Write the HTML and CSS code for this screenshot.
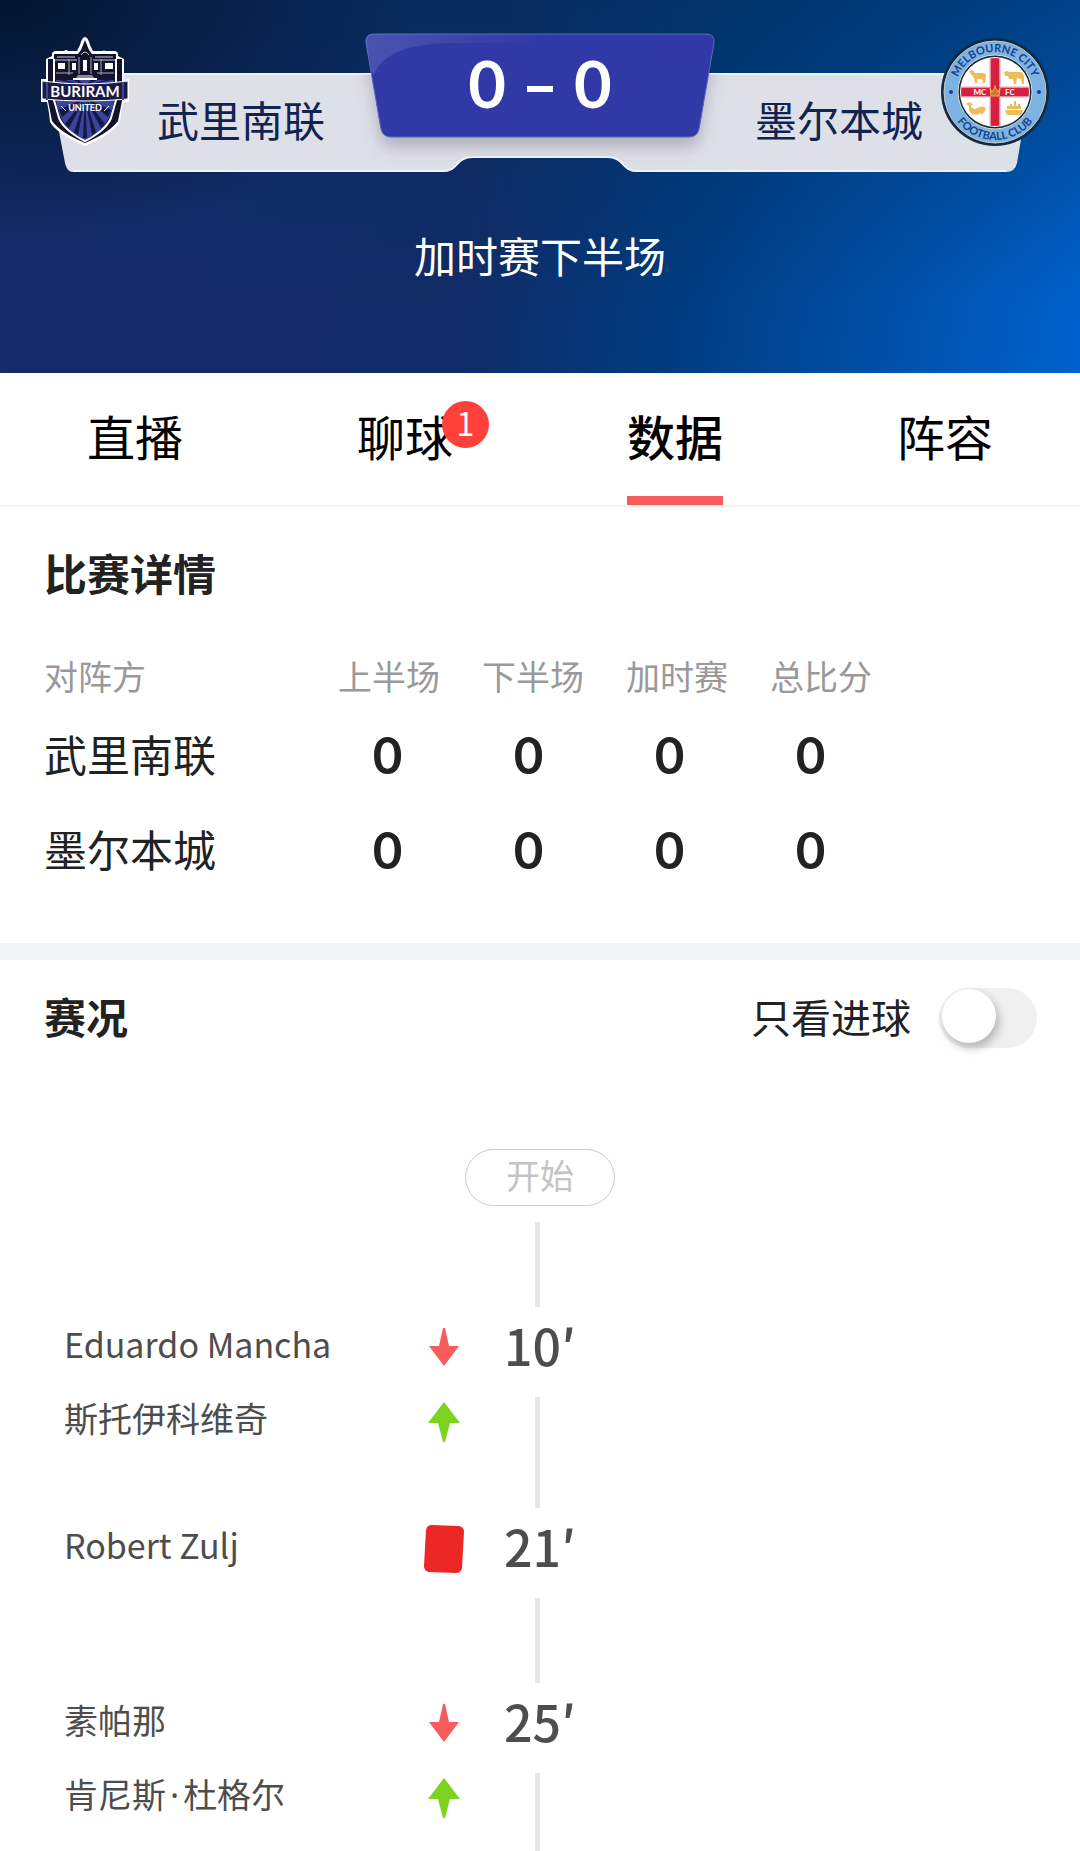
FILE: index.html
```html
<!DOCTYPE html>
<html lang="zh-CN">
<head>
    <meta charset="UTF-8">
    <meta name="viewport" content="width=device-width, initial-scale=1.0">
    <title>武里南联 - 墨尔本城</title>
    <link rel="stylesheet" href="styles.css">
</head>
<body>
    <header class="match-header">
        <div class="scoreboard">
            <svg class="board" viewBox="0 0 1080 180" aria-hidden="true">
                <defs>
                    <filter id="boardShadow" x="-10%" y="-10%" width="120%" height="150%">
                        <feDropShadow dx="0" dy="10" stdDeviation="8" flood-color="#5a5470" flood-opacity="0.35"/>
                    </filter>
                    <linearGradient id="shine" x1="0" y1="0" x2="1" y2="0">
                        <stop offset="0" stop-color="#fff" stop-opacity="0.13"/>
                        <stop offset="1" stop-color="#fff" stop-opacity="0"/>
                    </linearGradient>
                    <clipPath id="panelClip">
                        <path d="M48 74H1032L1017 163Q1015 172 1006 172H637C621 172 625 157 607 157H473C455 157 459 172 443 172H73Q67 172 65 163Z"/>
                    </clipPath>
                </defs>
                <path d="M48 74H1032L1017 163Q1015 172 1006 172H637C621 172 625 157 607 157H473C455 157 459 172 443 172H73Q67 172 65 163Z" fill="#dee0e8"/>
                <path d="M48 74H1032M73 171H443C459 171 455 157 473 157H607C625 157 621 171 637 171H1006" fill="none" stroke="#edf3fc" stroke-width="2"/>
                <g clip-path="url(#panelClip)">
                    <path d="M374 34H706Q715 34 714 43L699 129Q697 137 689 137H391Q383 137 381 129L366 43Q365 34 374 34Z" fill="#3039a5" filter="url(#boardShadow)"/>
                </g>
                <path d="M374 34H706Q715 34 714 43L699 129Q697 137 689 137H391Q383 137 381 129L366 43Q365 34 374 34Z" fill="#3039a5" stroke="#5a68bd"/>
                <path d="M374 34H540V43H450Q385 44 373 76L366 43Q365 34 374 34Z" fill="url(#shine)"/>
            </svg>

            <div class="team home">
                <!-- Escudo local -->
                <svg class="crest" viewBox="0 0 88 110" role="img" aria-label="Buriram United">
                    <path d="M44 1Q47 1 49 9L52 15H61Q63 14 65 15H74Q78 16 77 20L83 23V43H88V66H82L80 77L79 86Q72 98 44 110Q16 98 9 86L8 77L6 66H0V43H5V23L11 20Q10 16 14 15H23Q25 13 27 15H36L39 9Q41 1 44 1Z" fill="#fff"/>
                    <path d="M44 4L48 14L51 18H75V23H81V65L77 85Q68 97 44 107Q20 97 11 85L7 65V23H13V18H37L40 14Z" fill="#11142c"/>
                    <path d="M13 23V64L18 82Q23 94 44 105Q65 94 70 82L75 64V23" fill="none" stroke="#fff" stroke-width="2"/>
                    <path d="M15 44H73V64Q70 92 44 104Q18 92 15 64Z" fill="#3a43a0"/>
                    <path d="M44 62L37 99L33 96ZM44 62L28 92L24 88ZM44 62L21 81L18 74ZM44 62L51 99L55 96ZM44 62L60 92L64 88ZM44 62L67 81L70 74ZM44 62L42 102H46ZM44 50L18 44H24ZM44 50L32 44H38ZM44 50L50 44H56ZM44 50L64 44H70Z" fill="#14183f"/>
                    <path d="M16 21H34M54 21H72M14 24H36M52 24H74M40 19Q44 13 48 19" fill="none" stroke="#c9cbd3"/>
                    <path d="M17 27H24V33H17ZM31 27H35V34H31ZM53 27H57V34H53ZM64 27H72V33H64ZM42 24H46V35H42Z" fill="#fff"/>
                    <path d="M28 23V39M38 21V38M50 21V38M60 23V39M15 37H32M56 37H73" stroke="#a7a9b5"/>
                    <path d="M37 39H51L54 43H34Z" fill="#888b96"/>
                    <path d="M32 43H56" stroke="#fff" stroke-width="2"/>
                    <path d="M1 45Q44 51 87 45V63Q44 67 1 63Z" fill="#191c45" stroke="#fff"/>
                    <path d="M6 46V64M82 46V64" stroke="#3f488e" stroke-width="2"/>
                    <text class="crest-name" x="44" y="61">BURIRAM</text>
                    <text class="crest-sub" x="44" y="75">UNITED</text>
                    <path d="M20 70L25 75M68 70L63 75" stroke="#fff"/>
                </svg>
                <span class="team-name">武里南联</span>
            </div>

            <div class="score">
                <span>0</span><span class="dash"></span><span>0</span>
            </div>

            <div class="team away">
                <span class="team-name">墨尔本城</span>
                <!-- Escudo visitante -->
                <svg class="crest round" viewBox="0 0 108 108" role="img" aria-label="Melbourne City">
                    <defs>
                        <path id="arcTop" d="M14 54A40 40 0 0 1 94 54"/>
                        <path id="arcBottom" d="M6 54A48 48 0 0 0 102 54"/>
                        <clipPath id="inner"><circle cx="54" cy="54" r="34"/></clipPath>
                    </defs>
                    <circle cx="54" cy="54" r="54" fill="#152a40"/>
                    <circle cx="54" cy="54" r="51" fill="#7db3e3" stroke="#bfc9c5"/>
                    <circle cx="54" cy="54" r="37" fill="#152a40" stroke="#d9dcc9"/>
                    <circle cx="54" cy="54" r="35" fill="#fff"/>
                    <g clip-path="url(#inner)">
                        <path d="M54 18V90M18 54H90" stroke="#f3a5ae" stroke-width="12"/>
                        <path d="M54 18V90M18 54H90" stroke="#fff" stroke-width="11"/>
                        <path d="M54 18V90M18 54H90" stroke="#d7203f" stroke-width="9"/>
                    </g>
                    <g fill="#edbd5c">
                        <path d="M28 33L31 32L34 35H42Q45 35 45 39L44 45H42L41 41H36V45H34L33 40L30 36Z"/>
                        <path d="M63 34L66 33L69 34H80Q83 35 83 39V46H81L80 41L76 40L75 46H73L72 41L68 41L67 38L64 38Z"/>
                        <path d="M25 66L28 64L32 66L30 68Q32 73 36 70Q41 67 45 70L44 73L41 77L40 75Q33 79 29 74Q27 71 28 68ZM38 67L36 64M40 67L42 64"/>
                        <path d="M64 72H82L80 77H66ZM66 68H80V71H66ZM69 66H71V70H69ZM73 63H75V70H73ZM77 66H79V70H77Z"/>
                    </g>
                    <path d="M49 50L51 54L54 49L57 54L59 50L58 58H50ZM54 47V50" fill="#c97b2c" stroke="#f0b54a"/>
                    <circle cx="10" cy="54" r="2" fill="#16418a"/>
                    <circle cx="98" cy="54" r="2" fill="#16418a"/>
                    <text class="ring-mark" x="39" y="57">MC</text>
                    <text class="ring-mark" x="69" y="57">FC</text>
                    <text class="ring-text"><textPath href="#arcTop" startOffset="50%">MELBOURNE CITY</textPath></text>
                    <text class="ring-text"><textPath href="#arcBottom" startOffset="50%">FOOTBALL CLUB</textPath></text>
                </svg>
            </div>
        </div>
        <p class="status">加时赛下半场</p>
    </header>

    <nav class="tabs">
        <a href="#live">直播</a>
        <a href="#chat"><span class="tab-label">聊球<span class="badge">1</span></span></a>
        <a href="#data" class="active">数据</a>
        <a href="#lineup">阵容</a>
    </nav>

    <section class="details">
        <h2>比赛详情</h2>
        <table>
            <thead>
                <tr><th>对阵方</th><th>上半场</th><th>下半场</th><th>加时赛</th><th>总比分</th></tr>
            </thead>
            <tbody>
                <tr><th>武里南联</th><td>0</td><td>0</td><td>0</td><td>0</td></tr>
                <tr><th>墨尔本城</th><td>0</td><td>0</td><td>0</td><td>0</td></tr>
            </tbody>
        </table>
    </section>

    <section class="events">
        <div class="events-head">
            <h2>赛况</h2>
            <label for="goalsOnly">只看进球</label>
            <input type="checkbox" id="goalsOnly" class="switch">
        </div>

        <div class="timeline">
            <span class="start">开始</span>
            <span class="line"></span>

            <div class="event">
                <ul class="players">
                    <li><span>Eduardo Mancha</span> <svg class="icon" viewBox="0 0 40 50"><path class="out" d="M19 5H21L25 23H35L20 43L5 23H15Z"/></svg></li>
                    <li><span>斯托伊科维奇</span> <svg class="icon" viewBox="0 0 40 50"><path class="in" d="M20 5L36 26H26L21 45H19L14 26H4Z"/></svg></li>
                </ul>
                <div class="minute"><span class="time">10′</span><span class="line"></span></div>
            </div>

            <div class="event">
                <ul class="players">
                    <li><span>Robert Zulj</span> <svg class="icon" viewBox="0 0 40 50"><path class="card" d="M8 1L35 2Q40 3 40 8L38 44Q37 49 32 49L5 48Q0 47 0 42L2 6Q3 1 8 1Z"/></svg></li>
                </ul>
                <div class="minute"><span class="time">21′</span><span class="line"></span></div>
            </div>

            <div class="event">
                <ul class="players">
                    <li><span>素帕那</span> <svg class="icon" viewBox="0 0 40 50"><path class="out" d="M19 5H21L25 23H35L20 43L5 23H15Z"/></svg></li>
                    <li><span>肯尼斯<span class="dot">·</span>杜格尔</span> <svg class="icon" viewBox="0 0 40 50"><path class="in" d="M20 5L36 26H26L21 45H19L14 26H4Z"/></svg></li>
                </ul>
                <div class="minute"><span class="time">25′</span><span class="line"></span></div>
            </div>
        </div>
    </section>
</body>
</html>
```

FILE: styles.css
```css
* {
    box-sizing: border-box;
}

body {
    display: flex;
    flex-direction: column;
    min-height: 100vh;
    margin: 0;
    background: #fff;
    color: #222;
    font-family: "Noto Sans CJK SC", sans-serif;
}

h2, p, ul {
    margin: 0;
    padding: 0;
}

h2 {
    font-size: 43px;
    line-height: 60px;
    font-weight: 700;
}

/* Cabecera */
.match-header {
    padding-bottom: 86px;
    background:
        radial-gradient(ellipse 420px 240px at 0 0, rgba(0, 12, 28, 0.7), rgba(0, 20, 50, 0)),
        linear-gradient(180deg, rgba(0, 44, 88, 0.55), rgba(0, 44, 88, 0) 80%),
        linear-gradient(100deg, #152b6a 0%, #112b66 44%, #003c80 64%, #004fa6 82%, #0062ce 100%);
}

.scoreboard {
    position: relative;
    display: grid;
    grid-template-columns: 1fr auto 1fr;
    align-items: start;
    max-width: 1080px;
    height: 180px;
    margin: 0 auto;
    padding-top: 36px;
}

.board {
    position: absolute;
    top: 0;
    left: 0;
    width: 100%;
    height: 180px;
}

.team {
    position: relative;
    display: flex;
    align-items: flex-start;
}

.home {
    gap: 28px;
    padding-left: 41px;
}

.away {
    justify-content: flex-end;
    gap: 18px;
    padding-right: 31px;
}

.team-name {
    padding-top: 53px;
    color: #12234f;
    font-size: 42px;
    line-height: 60px;
}

.crest {
    width: 88px;
    height: 110px;
}

.crest.round {
    width: 108px;
    height: 108px;
    margin-top: 2px;
}

.crest text {
    font-family: Lato, sans-serif;
    font-weight: 700;
    text-anchor: middle;
}

.crest .crest-name {
    fill: #fff;
    font-size: 15px;
}

.crest .crest-sub {
    fill: #fff;
    font-size: 9px;
}

.crest .ring-text {
    fill: #16418a;
    font-size: 11px;
}

.crest .ring-mark {
    fill: #fff;
    font-size: 8px;
}

.score {
    position: relative;
    display: flex;
    align-items: center;
    gap: 21px;
    height: 94px;
    color: #fff;
    font-family: Lato, sans-serif;
    font-size: 65px;
    line-height: 94px;
    font-weight: 700;
}

.dash {
    width: 26px;
    height: 6px;
    margin-top: 12px;
    background: #fff;
}

.status {
    padding-top: 43px;
    color: #fff;
    font-size: 42px;
    line-height: 64px;
    text-align: center;
}

/* Pestañas */
.tabs {
    display: flex;
    border-bottom: 2px solid #f3f3f3;
}

.tabs a {
    display: flex;
    flex: 1;
    flex-direction: column;
    align-items: center;
    height: 132px;
    color: #000;
    font-size: 48px;
    line-height: 124px;
    text-decoration: none;
}

.tabs .active {
    font-weight: 500;
}

.active::after {
    content: "";
    width: 96px;
    height: 9px;
    margin-top: -1px;
    background: #f95c5c;
}

.tab-label {
    position: relative;
}

.badge {
    position: absolute;
    top: 28px;
    right: -36px;
    width: 47px;
    height: 47px;
    border-radius: 50%;
    background: #ff413a;
    color: #fff;
    font-size: 32px;
    line-height: 43px;
    text-align: center;
}

/* Detalles del partido */
.details {
    padding: 35px 44px 47px;
    border-bottom: 17px solid #f2f3f6;
}

table {
    display: block;
    margin-top: 44px;
}

thead, tbody {
    display: block;
}

tr {
    display: flex;
}

th, td {
    padding: 0;
    font-weight: 400;
    text-align: center;
}

thead th {
    width: 144px;
    color: #999;
    font-size: 34px;
    line-height: 60px;
}

tbody th {
    font-size: 43px;
    line-height: 95px;
}

tr th:first-child {
    width: 273px;
    text-align: left;
}

td {
    width: 141px;
    height: 95px;
    font-family: Lato, sans-serif;
    font-size: 51px;
    line-height: 97px;
    font-weight: 700;
}

/* Sucesos */
.events {
    display: flex;
    flex: 1;
    flex-direction: column;
    padding-top: 28px;
}

.events-head {
    display: flex;
    height: 60px;
    padding: 0 43px 0 44px;
    font-size: 40px;
    line-height: 56px;
}

.events-head h2 {
    flex: 1;
    font-size: 42px;
    line-height: 56px;
}

.switch {
    appearance: none;
    width: 98px;
    height: 60px;
    margin: 0 0 0 28px;
    border-radius: 30px;
    background: #f0f0f0;
}

.switch::before {
    content: "";
    display: block;
    width: 54px;
    height: 54px;
    margin: 1px 3px;
    border-radius: 50%;
    background: #fff;
    box-shadow: 3px 5px 10px rgba(0, 0, 0, 0.25);
}

.switch:checked {
    background: #f95c5c;
}

.switch:checked::before {
    margin-left: 41px;
}

.timeline {
    display: flex;
    flex: 1;
    flex-direction: column;
    align-items: center;
    padding-top: 101px;
}

.start {
    width: 150px;
    height: 57px;
    margin-bottom: 16px;
    border: 1px solid #ccc;
    border-radius: 29px;
    color: #c4c4c4;
    font-size: 34px;
    line-height: 49px;
    text-align: center;
}

.line {
    width: 5px;
    min-height: 85px;
    margin-right: 5px;
    background: #e6e6e6;
}

.event {
    display: grid;
    grid-template-columns: 1fr auto 1fr;
    width: 100%;
    color: #4d4d4d;
}

.players {
    padding: 0 40px 53px 64px;
    list-style: none;
}

.players li {
    display: flex;
    justify-content: space-between;
    height: 74px;
    font-size: 34px;
    line-height: 74px;
}

.dot {
    font-family: "Noto Sans", sans-serif;
    padding: 0 4px;
}

.icon {
    width: 40px;
    height: 50px;
    margin-top: 16px;
}

.out {
    fill: #f95c5c;
}

.in {
    fill: #7ed321;
}

.card {
    fill: #ed2626;
}

.minute {
    display: flex;
    flex-direction: column;
    align-items: center;
}

.minute .line {
    flex: 1;
}

.time {
    height: 90px;
    font-size: 50px;
    line-height: 74px;
    font-weight: 500;
}

.event:last-child {
    flex: 1;
}

.event:last-child .players {
    padding-bottom: 0;
}

.event:last-child .line {
    min-height: 0;
}
```
